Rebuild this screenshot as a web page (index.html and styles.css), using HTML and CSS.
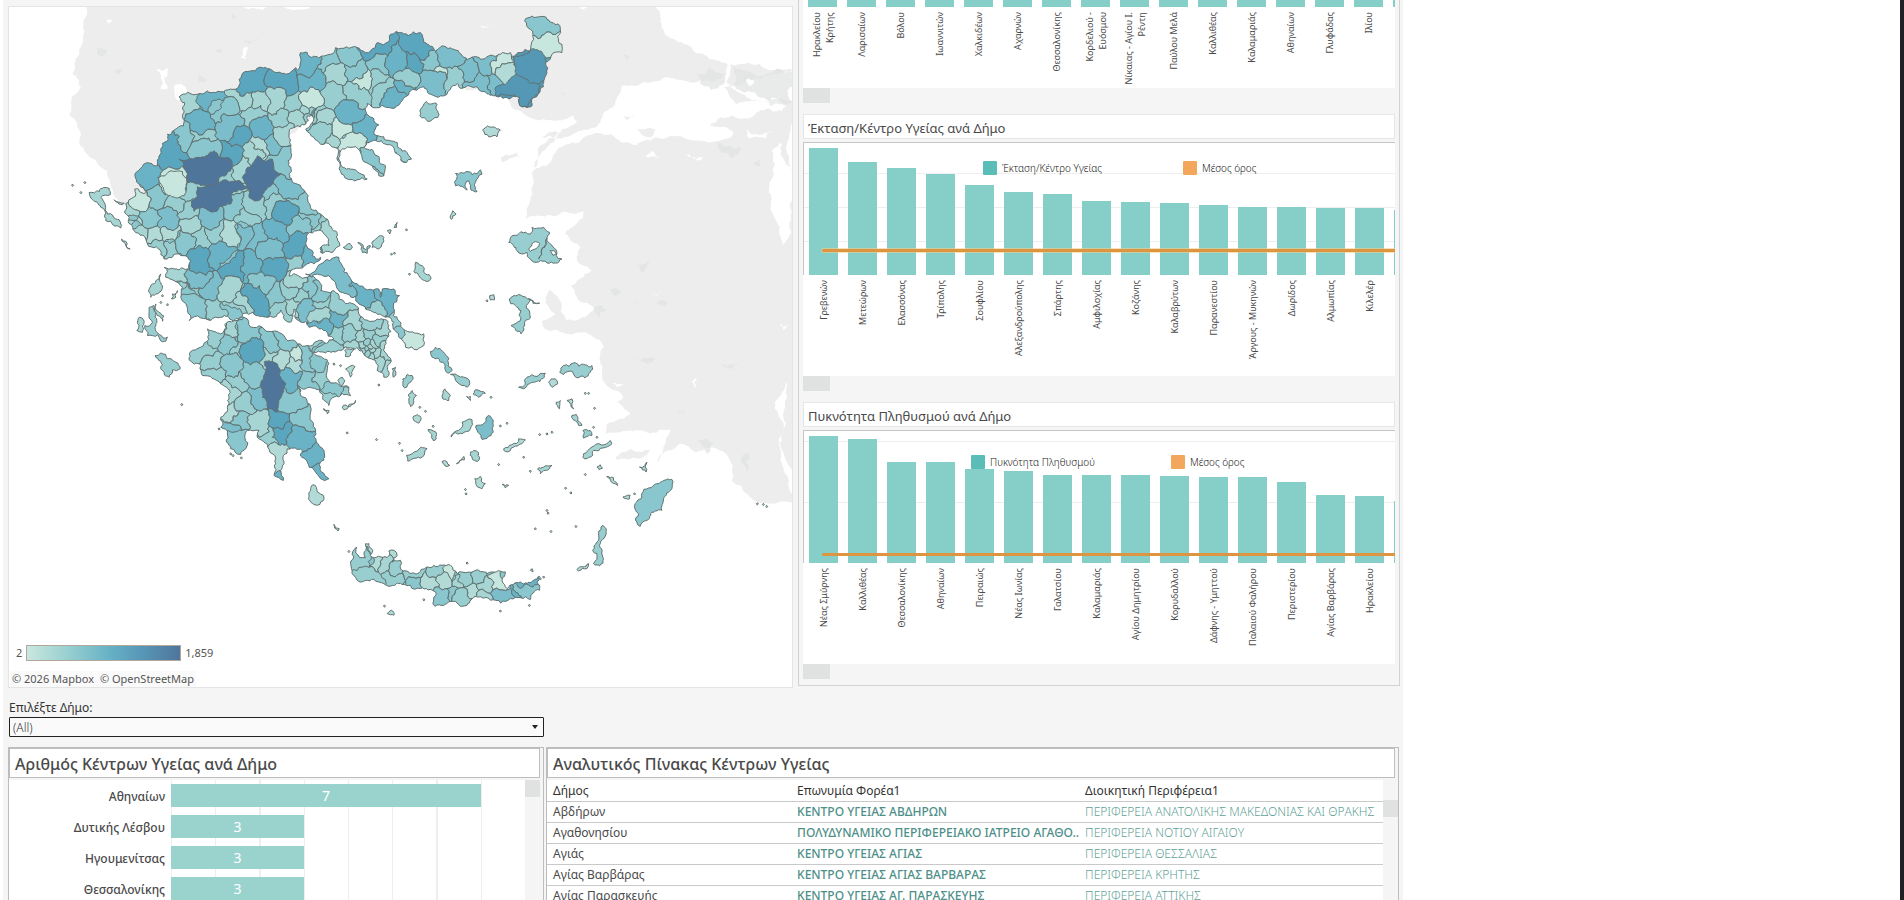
FILE: index.html
```html
<!DOCTYPE html>
<html lang="el">
<head>
<meta charset="utf-8">
<title>Κέντρα Υγείας</title>
<link rel="stylesheet" href="styles.css">
</head>
<body>
<main class="dashboard">
  <div class="upper">
    <section class="map-card" aria-label="Χάρτης Δήμων">
      <svg class="map" id="map" viewBox="24 18 2352 2043" preserveAspectRatio="xMidYMin slice"></svg>
      <div class="map-legend"><span>2</span><span class="ramp"></span><span>1,859</span></div>
      <div class="credits"><a href="#mapbox">© 2026 Mapbox</a><a href="#osm">© OpenStreetMap</a></div>
    </section>
    <section class="charts">
      <div class="chart first"><div class="plot" id="chart-population"></div></div>
      <div class="thumb"></div>
      <h2 class="chart-title">Έκταση/Κέντρο Υγείας ανά Δήμο</h2>
      <div class="chart">
        <div class="grid-line area-1"></div><div class="grid-line area-2"></div><div class="grid-line area-3"></div>
        <div class="plot" id="chart-area"></div>
        <div class="average area-average"></div>
        <div class="legend area-legend"><span class="key teal">Έκταση/Κέντρο Υγείας</span><span class="key orange">Μέσος όρος</span></div>
      </div>
      <div class="thumb"></div>
      <h2 class="chart-title">Πυκνότητα Πληθυσμού ανά Δήμο</h2>
      <div class="chart">
        <div class="grid-line density-1"></div><div class="grid-line density-2"></div>
        <div class="plot" id="chart-density"></div>
        <div class="average density-average"></div>
        <div class="legend density-legend"><span class="key teal">Πυκνότητα Πληθυσμού</span><span class="key orange">Μέσος όρος</span></div>
      </div>
      <div class="thumb"></div>
    </section>
  </div>

  <div class="filter">
    <label for="municipality">Επιλέξτε Δήμο:</label>
    <div class="select-box">
      <select id="municipality"><option>(All)</option></select>
      <svg class="caret" viewBox="0 0 6 4"><path d="M0 0h6L3 4z"/></svg>
    </div>
  </div>

  <div class="lower">
    <section class="panel counts">
      <h2 class="panel-title">Αριθμός Κέντρων Υγείας ανά Δήμο</h2>
      <div class="panel-body">
        <div class="count-rows">
          <div class="count-row"><span class="name">Αθηναίων</span><span class="track"><span class="fill seven">7</span></span></div>
          <div class="count-row"><span class="name">Δυτικής Λέσβου</span><span class="track"><span class="fill three">3</span></span></div>
          <div class="count-row"><span class="name">Ηγουμενίτσας</span><span class="track"><span class="fill three">3</span></span></div>
          <div class="count-row"><span class="name">Θεσσαλονίκης</span><span class="track"><span class="fill three">3</span></span></div>
        </div>
        <div class="scroll"><div class="scroll-thumb"></div></div>
      </div>
    </section>
    <section class="panel detail">
      <h2 class="panel-title">Αναλυτικός Πίνακας Κέντρων Υγείας</h2>
      <div class="panel-body">
        <table>
          <colgroup><col class="c1"><col class="c2"><col></colgroup>
          <thead><tr><th>Δήμος</th><th>Επωνυμία Φορέα1</th><th>Διοικητική Περιφέρεια1</th></tr></thead>
          <tbody>
            <tr><td>Αβδήρων</td><td>ΚΕΝΤΡΟ ΥΓΕΙΑΣ ΑΒΔΗΡΩΝ</td><td>ΠΕΡΙΦΕΡΕΙΑ ΑΝΑΤΟΛΙΚΗΣ ΜΑΚΕΔΟΝΙΑΣ ΚΑΙ ΘΡΑΚΗΣ</td></tr>
            <tr><td>Αγαθονησίου</td><td>ΠΟΛΥΔΥΝΑΜΙΚΟ ΠΕΡΙΦΕΡΕΙΑΚΟ ΙΑΤΡΕΙΟ ΑΓΑΘΟ..</td><td>ΠΕΡΙΦΕΡΕΙΑ ΝΟΤΙΟΥ ΑΙΓΑΙΟΥ</td></tr>
            <tr><td>Αγιάς</td><td>ΚΕΝΤΡΟ ΥΓΕΙΑΣ ΑΓΙΑΣ</td><td>ΠΕΡΙΦΕΡΕΙΑ ΘΕΣΣΑΛΙΑΣ</td></tr>
            <tr><td>Αγίας Βαρβάρας</td><td>ΚΕΝΤΡΟ ΥΓΕΙΑΣ ΑΓΙΑΣ ΒΑΡΒΑΡΑΣ</td><td>ΠΕΡΙΦΕΡΕΙΑ ΚΡΗΤΗΣ</td></tr>
            <tr><td>Αγίας Παρασκευής</td><td>ΚΕΝΤΡΟ ΥΓΕΙΑΣ ΑΓ. ΠΑΡΑΣΚΕΥΗΣ</td><td>ΠΕΡΙΦΕΡΕΙΑ ΑΤΤΙΚΗΣ</td></tr>
          </tbody>
        </table>
        <div class="scroll below-head"><div class="scroll-thumb"></div></div>
      </div>
    </section>
  </div>
</main>
<div class="window-edge"></div>
<script src="app.js"></script>
</body>
</html>
```

FILE: styles.css
```css
* { box-sizing: border-box; }
body {
  margin: 0;
  height: 100vh;
  overflow: hidden;
  display: flex;
  justify-content: space-between;
  background: #fff;
  font-family: "Noto Sans", "Open Sans", sans-serif;
  color: #4a4a4a;
}
h2 { margin: 0; }
.dashboard {
  flex: 0 1 1400px;
  min-width: 0;
  margin-left: 3px;
  padding: 0 3px 0 5px;
  background: #f5f5f5;
  display: flex;
  flex-direction: column;
  overflow: hidden;
}
.window-edge { width: 4px; background: #202124; }

.upper {
  display: grid;
  grid-template-columns: minmax(0, 785fr) minmax(0, 602fr);
  gap: 5px;
  height: 688px;
  flex: none;
}
.map-card {
  position: relative;
  margin-top: 6px;
  border: 1px solid #e4e4e4;
  background: #fff;
  box-shadow: 0 -6px 0 #f5f5f5, 0 -7px 0 #e4e4e4;
  overflow: hidden;
}
.map { display: block; width: 100%; height: 100%; }
.terrain { fill: #ededed; }
.terrain-shade { fill: #e0e2e2; opacity: .7; }
.water { fill: #fff; }
.cell, .isle { stroke: #60706f; stroke-width: 3; stroke-linejoin: round; }
.base { fill: #8ac6cd; }
.coast { fill: none; stroke: #60706f; stroke-width: 3; stroke-linejoin: round; }
.map-legend {
  position: absolute; left: 7px; bottom: 26px;
  display: flex; align-items: center; gap: 4px;
  font-size: 11px; line-height: 16px; color: #555;
}
.ramp {
  width: 155px; height: 16px;
  border: 1px solid #b3a89c;
  background: linear-gradient(90deg, #c9e7df, #9bd1d1 25%, #65b0c5 55%, #5797b7 75%, #4f759b);
}
.credits {
  position: absolute; left: 1px; bottom: 0;
  display: flex; gap: 6px; padding: 0 2px;
  font-size: 11px; line-height: 16px; background: #fafafa;
}
.credits a { color: #555; text-decoration: none; }

.charts {
  height: 686px;
  padding: 0 4px;
  border: 1px solid #d2d2d2;
  border-top: 0;
  overflow: hidden;
}
.chart {
  position: relative;
  height: 234px;
  overflow: hidden;
  border-top: 1px solid #c6c6c6;
  background: #fff;
}
.chart.first { height: 88px; border: 0; }
.plot { display: flex; position: relative; }
.column { flex: 0 0 39px; display: flex; flex-direction: column; align-items: center; }
.bar-space { height: 132px; display: flex; align-items: flex-end; }
.chart:not(.first) .plot { border-left: 1px solid #c6c6c6; border-image: linear-gradient(#c6c6c6 132px, transparent 132px) 1; }
.first .bar-space { height: 7px; }
.bar { width: 29px; background: #86cfc9; }
.caption {
  margin-top: 5px;
  writing-mode: vertical-rl;
  transform: rotate(180deg);
  font-size: 9px;
  line-height: 13px;
  text-align: right;
  color: #4a4a4a;
  white-space: pre;
}
.grid-line { position: absolute; left: 0; right: 0; height: 1px; background: #eeeeee; }
.area-1 { top: 30px; }
.area-2 { top: 64px; }
.area-3 { top: 98px; }
.density-1 { top: 10px; }
.density-2 { top: 71px; }
.average { position: absolute; left: 19px; right: 0; height: 3px; background: #dd9542; border-radius: 2px 0 0 2px; }
.area-average { top: 106px; box-shadow: 0 0 0 1px rgba(245, 205, 140, .6); }
.density-average { top: 122px; }
.legend { position: absolute; display: flex; }
.area-legend { top: 18px; left: 180px; }
.density-legend { top: 24px; left: 168px; }
.key { width: 200px; display: flex; gap: 5px; align-items: center; font-size: 10px; font-weight: 300; line-height: 14px; color: #222; }
.key::before { content: ""; width: 14px; height: 14px; border-radius: 1px; }
.teal::before { background: #5abdb8; }
.orange::before { background: #f3a75d; }
.thumb { width: 27px; height: 15px; background: #e0e2e2; }
.chart-title {
  height: 25px;
  margin: 11px 0 3px;
  padding: 0 4px;
  border: 1px solid #e6e6e6;
  background: #fff;
  font-size: 13px;
  line-height: 26px;
  font-weight: 400;
}

.filter { width: 38.5%; flex: none; padding: 10px 0 0 1px; color: #333; }
.filter label { display: block; font-size: 12px; line-height: 19px; }
.select-box { position: relative; }
.filter select {
  appearance: none;
  display: block;
  width: 100%;
  height: 20px;
  padding: 0 3px;
  border: 1px solid #222;
  border-radius: 1px;
  background: #fafafa;
  font: 300 12px "Noto Sans", sans-serif;
  color: #333;
}
.caret { position: absolute; right: 6px; top: 8px; width: 6px; height: 4px; fill: #222; }

.lower { flex: 1; min-height: 0; display: flex; gap: 2px; margin-top: 10px; padding-right: 1px; }
.panel { border: 1px solid #bdbdbd; border-bottom: 0; min-width: 0; overflow: hidden; }
.counts { flex: 536 1 0; }
.detail { flex: 854 1 0; }
.panel-title {
  height: 30px;
  margin-right: 3px;
  padding: 0 5px;
  border: 1px solid #bdbdbd;
  background: #fff;
  font-size: 16px;
  line-height: 30px;
  font-weight: 500;
}
.panel-body { display: flex; margin-top: 2px; height: 130px; }
.counts .panel-body { margin-right: 3px; }
.scroll { flex: 0 0 15px; }
.scroll-thumb { height: 17px; background: #e0e2e2; }
.below-head { padding-top: 20px; }
.count-rows { flex: 1; background: #fff; }
.count-row { display: flex; height: 31px; }
.name { flex: 0 0 162px; padding: 4px 6px 0 0; font-size: 12px; line-height: 25px; font-weight: 500; text-align: right; }
.track {
  flex: 1;
  padding-top: 4px;
  background: repeating-linear-gradient(90deg, #eeeeee 0 1px, transparent 1px 12.5%);
}
.fill { display: block; height: 23px; background: #9ad2cd; color: #fff; font-size: 14px; line-height: 24px; text-align: center; }
.seven { width: 87.5%; }
.three { width: 37.5%; }

table { flex: 1; min-width: 0; table-layout: fixed; border-collapse: collapse; background: #fff; align-self: flex-start; }
.c1 { width: 244px; }
.c2 { width: 288px; }
th, td { height: 21px; padding: 0 0 0 6px; border-bottom: 1px solid #c9c9c9; font-size: 12px; line-height: 20px; text-align: left; white-space: nowrap; overflow: hidden; }
th { font-weight: 400; color: #333; padding-top: 2px; line-height: 18px; }
td { font-weight: 400; }
td:nth-child(2) { font-weight: 500; color: #4e8f88; }
td:nth-child(3) { font-weight: 300; color: #5f9f98; }
```

FILE: app.js
```js
const captions = {
  population: ["Ηρακλείου\nΚρήτης", "Λαρισαίων", "Βόλου", "Ιωαννιτών", "Χαλκιδέων", "Αχαρνών", "Θεσσαλονίκης", "Κορδελιού -\nΕυόσμου", "Νίκαιας - Αγίου Ι.\nΡέντη", "Παύλου Μελά", "Καλλιθέας", "Καλαμαριάς", "Αθηναίων", "Γλυφάδας", "Ιλίου", ""],
  area: ["Γρεβενών", "Μετεώρων", "Ελασσόνας", "Τρίπολης", "Σουφλίου", "Αλεξανδρούπολης", "Σπάρτης", "Αμφιλοχίας", "Κοζάνης", "Καλαβρύτων", "Παρανεστίου", "Άργους - Μυκηνών", "Δωρίδος", "Αλμωπίας", "Κιλελέρ", ""],
  density: ["Νέας Σμύρνης", "Καλλιθέας", "Θεσσαλονίκης", "Αθηναίων", "Πειραιώς", "Νέας Ιωνίας", "Γαλατσίου", "Καλαμαριάς", "Αγίου Δημητρίου", "Κορυδαλλού", "Δάφνης - Υμηττού", "Παλαιού Φαλήρου", "Περιστερίου", "Αγίας Βαρβάρας", "Ηρακλείου", ""]
};
const heights = {
  population: Array(16).fill(7),
  area: [127, 113, 107, 101, 90, 83, 81, 74, 73, 72, 70, 68, 68, 67, 67, 65],
  density: [127, 124, 101, 101, 94, 92, 88, 88, 88, 87, 86, 86, 81, 68, 67, 62]
};
for (const key of Object.keys(captions)) {
  document.getElementById("chart-" + key).innerHTML = captions[key].map((text, i) =>
    `<div class="column"><div class="bar-space"><div class="bar" style="height:${heights[key][i]}px"></div></div><div class="caption">${text}</div></div>`).join("");
}

const ramp = ["#c6e6de", "#b2dbd7", "#a6d5d3", "#98ced0", "#8ac6cd", "#7bbdca", "#6ab2c6", "#5ba6bf", "#5598b6", "#4f759b"];
const parse = s => s.trim().split(/\s+/).map(p => p.split(",").map(Number));
const hash = n => { const v = Math.sin(n * 12.9898) * 43758.5453; return v - Math.floor(v) - 0.5; };

/* Breaks a straight edge into an irregular one; the same edge always breaks the same way. */
function rough(a, b, amount, minimum) {
  const flip = a[0] > b[0] || (a[0] === b[0] && a[1] > b[1]);
  const [p, q] = flip ? [b, a] : [a, b];
  const len = Math.hypot(q[0] - p[0], q[1] - p[1]);
  if (len < minimum) return [b];
  const k = hash(Math.round(p[0]) * 3.1 + Math.round(p[1]) * 7.7 + Math.round(q[0]) * 1.3 + Math.round(q[1])) * amount;
  const m = [(p[0] + q[0]) / 2 - (q[1] - p[1]) * k, (p[1] + q[1]) / 2 + (q[0] - p[0]) * k];
  return rough(a, m, amount, minimum).concat(rough(m, b, amount, minimum));
}
function outline(points, amount = 0.5, minimum = 9) {
  let out = [];
  points.forEach((p, i) => { out = out.concat(rough(p, points[(i + 1) % points.length], amount, minimum)); });
  return "M" + out.map(p => p.map(v => v.toFixed(1)).join(" ")).join("L") + "Z";
}
function cellOf(seed, seeds) {
  let poly = [[seed[0] - 260, seed[1] - 260], [seed[0] + 260, seed[1] - 260], [seed[0] + 260, seed[1] + 260], [seed[0] - 260, seed[1] + 260]];
  for (const s of seeds) {
    if (s === seed) continue;
    const nx = s[0] - seed[0], ny = s[1] - seed[1];
    const c = (s[0] + seed[0]) / 2 * nx + (s[1] + seed[1]) / 2 * ny;
    const next = [];
    poly.forEach((p, i) => {
      const q = poly[(i + 1) % poly.length];
      const dp = p[0] * nx + p[1] * ny - c, dq = q[0] * nx + q[1] * ny - c;
      if (dp <= 0) next.push(p);
      if (dp * dq < 0) { const t = dp / (dp - dq); next.push([p[0] + (q[0] - p[0]) * t, p[1] + (q[1] - p[1]) * t]); }
    });
    poly = next;
  }
  return poly.map(p => p.map(Math.round));
}

const lands = {
  north: {
    shape: "372,630 375,608 397,590 402,565 420,575 438,575 415,550 402,520 425,497 470,495 480,450 485,428 500,420 500,400 520,388 548,375 550,330 535,288 590,280 620,270 645,275 675,268 704,265 722,225 750,210 800,203 830,215 870,213 885,200 890,208 900,155 920,155 990,160 1005,140 1070,140 1080,148 1130,125 1165,122 1170,100 1205,95 1222,105 1260,95 1270,125 1305,150 1320,138 1360,145 1400,178 1440,175 1465,165 1480,165 1500,160 1530,155 1542,170 1560,155 1590,150 1600,115 1590,85 1573,60 1595,45 1640,55 1680,80 1685,130 1685,155 1655,160 1650,175 1628,180 1630,245 1620,265 1600,290 1580,320 1565,318 1560,290 1520,290 1480,285 1440,270 1420,260 1385,262 1370,248 1350,265 1320,285 1290,280 1260,260 1235,265 1220,285 1200,305 1160,320 1100,308 1095,330 1120,360 1135,372 1120,400 1150,408 1190,425 1215,450 1233,475 1218,485 1195,462 1160,432 1120,418 1100,425 1090,440 1130,465 1155,495 1150,525 1135,525 1115,495 1085,475 1078,450 1020,450 1015,478 1050,505 1100,535 1070,537 1020,512 1012,480 1015,450 960,430 940,410 915,385 938,362 935,342 920,345 915,370 880,380 865,410 870,440 862,480 865,520 890,550 915,575 930,620 960,640 985,670 1010,700 1018,735 1000,750 960,755 965,735 985,735 980,710 950,690 920,700 915,730 935,750 945,775 960,770 940,790 905,802 870,810 865,826 920,830 960,850 960,870 1000,870 1015,895 1060,910 1075,940 1130,955 1165,975 1162,1010 1158,1060 1167,1090 1165,1125 1150,1130 1130,1110 1125,1080 1100,1070 1085,1050 1050,1042 1020,1050 975,1057 930,1055 920,1035 950,1022 1000,1015 975,990 925,980 895,960 880,925 868,965 840,928 820,950 780,948 730,938 660,950 600,952 565,960 560,930 540,890 545,860 520,840 495,830 490,800 520,805 565,805 570,780 545,765 505,770 490,775 480,762 440,730 400,690 385,650",
    seeds: "570,310,2 635,300,6 760,240,7 850,250,7 730,300,2 670,335,4 600,370,6 775,300,2 825,300,2 930,240,6 908,185,6 990,180,4 1040,160,4 1130,150,7 1010,215,2 1060,210,4 1085,235,0 1140,195,4 1130,240,3 1065,275,3 1155,270,3 1000,290,3 1190,190,6 1190,285,6 930,310,0 880,315,3 690,375,5 760,345,3 840,355,3 890,350,2 790,385,6 850,390,2 600,405,3 540,410,4 1050,330,6 960,355,2 960,390,3 1030,390,0 1090,380,6 1045,425,0 990,430,2 1050,505,3 1120,480,4 1180,425,3 715,410,7 700,455,7 605,440,4 510,465,7 750,450,2 725,490,2 820,430,5 840,475,4 770,440,1 440,530,6 515,550,0 690,535,3 570,570,3 410,600,0 470,590,4 800,580,4 860,555,5 895,590,4 520,615,3 385,640,2 400,670,2 440,655,4 500,655,5 560,640,3 625,650,5 700,620,4 760,620,3 820,610,3 855,640,7 930,650,4 415,695,2 455,710,1 510,700,1 570,670,2 600,710,3 645,690,3 690,695,1 735,650,3 725,695,5 765,710,5 830,690,6 895,680,4 970,690,3 1005,725,2 470,745,3 515,740,3 545,720,4 600,780,7 660,760,6 810,750,5 890,740,7 930,770,6 750,800,6 700,800,7 820,805,7 890,790,3 530,820,2 630,860,5 590,830,5 570,880,3 685,880,2 720,900,2 765,890,7 790,850,4 830,880,4 860,930,3 590,930,4 640,930,3 690,925,3 890,840,2 870,870,3 900,890,3 930,865,4 960,885,4 880,915,2 915,920,5 965,900,3 1010,905,3 965,945,2 1010,950,6 970,975,6 1060,970,2 1110,970,3 1140,990,2 1050,1000,3 1010,1005,3 940,1040,3 1000,1045,3 1060,1040,2 1085,1010,2 1105,1005,3 1130,1020,3 1150,1060,2 1155,1100,2 1135,1080,2 1090,1035,2 1100,1028,3 1108,1038,2 1098,1045,3 1088,1050,2 1112,1050,2 1118,1030,2 1104,1055,3 1112,1064,2 1125,1060,2 930,335,3 918,335,2 925,345,3 940,340,2 948,345,3 1260,150,7 1240,190,7 1225,230,3 1210,270,6 1280,180,4 1345,165,5 1280,240,5 1320,235,0 1355,235,3 1410,210,5 1430,240,5 1450,190,5 1500,190,0 1520,220,1 1470,255,5 1585,190,8 1545,270,8 1590,270,8 1640,170,7 1640,138,0 1640,90,4"
  },
  peloponnese: {
    shape: "620,985 660,1000 700,960 740,955 790,985 850,1005 890,1030 940,1060 985,1090 980,1110 985,1140 1045,1160 1050,1185 1000,1190 985,1215 965,1180 915,1165 893,1155 900,1185 930,1235 945,1290 970,1350 960,1385 985,1435 960,1435 920,1385 905,1350 860,1345 850,1390 840,1410 848,1440 820,1425 825,1390 815,1360 775,1315 775,1290 740,1290 732,1310 735,1345 720,1362 690,1345 680,1300 660,1280 660,1250 685,1210 685,1190 660,1150 605,1125 600,1095 565,1078 568,1055 600,1040",
    seeds: "700,980,2 740,1000,4 640,1010,3 680,1030,4 620,1060,3 710,1040,3 755,1050,7 820,1030,4 860,1030,4 810,1065,2 850,1070,1 890,1060,0 880,1085,1 930,1080,4 640,1085,3 640,1115,3 690,1095,4 745,1120,4 870,1125,6 930,1140,4 970,1130,3 1000,1170,3 690,1170,2 710,1145,3 770,1190,5 735,1210,3 870,1200,4 690,1235,1 720,1260,4 695,1300,5 725,1320,4 775,1265,2 830,1255,7 845,1295,7 905,1250,4 890,1310,6 800,1310,3 840,1370,1 940,1350,6 970,1420,6"
  },
  euboea: {
    shape: "915,820 960,790 1015,770 1025,795 1070,850 1135,865 1140,890 1145,865 1180,865 1197,885 1195,960 1215,990 1270,1000 1270,1035 1250,1048 1215,1040 1195,1010 1180,965 1145,945 1120,935 1075,910 1040,880 1000,840 950,820",
    seeds: "980,800,4 1050,840,5 1100,885,6 1165,900,6 1110,925,3 1190,980,3 1240,1020,0"
  },
  crete: {
    shape: "1060,1725 1060,1670 1068,1640 1077,1672 1095,1672 1095,1630 1105,1630 1108,1665 1160,1672 1165,1652 1180,1650 1190,1665 1175,1685 1200,1680 1208,1712 1280,1700 1300,1695 1350,1695 1370,1720 1440,1714 1460,1720 1515,1715 1505,1740 1520,1765 1560,1745 1600,1740 1618,1728 1618,1770 1590,1798 1530,1795 1470,1800 1400,1815 1304,1818 1305,1775 1260,1765 1230,1755 1150,1750 1120,1737 1070,1740",
    seeds: "1080,1685,3 1125,1680,1 1155,1685,2 1100,1730,3 1180,1660,1 1190,1700,3 1180,1735,3 1240,1715,3 1310,1710,3 1350,1720,0 1290,1745,1 1250,1752,4 1330,1735,1 1320,1790,4 1360,1790,4 1380,1735,2 1415,1770,1 1400,1735,3 1430,1730,3 1450,1755,2 1440,1790,2 1485,1745,0 1500,1790,5 1570,1790,6 1590,1750,6 1390,1790,3"
  }
};
const overlays = [
  [9, "535,475 600,470 640,450 655,470 690,475 690,510 655,530 650,548 600,555 560,545 555,510"],
  [9, "590,558 650,545 745,560 690,585 690,610 655,618 650,630 580,632 572,600 590,585"],
  [9, "725,530 740,500 770,465 790,480 815,475 820,505 840,518 800,560 770,600 745,590 740,560"],
  [9, "790,1085 830,1090 855,1150 845,1180 830,1235 800,1225 785,1190 780,1150"],
  [0, "470,530 510,510 545,512 558,540 550,585 530,592 490,572"],
  [8, "1540,165 1590,148 1628,160 1628,240 1600,250 1560,240 1545,215"],
  [8, "1485,260 1515,250 1545,220 1590,248 1620,255 1602,290 1582,318 1565,318 1558,290 1485,285"]
];
const isles = [
  [2, "265,575 325,563 328,582 300,590 320,640 345,655 360,682 315,660 300,620 270,592"], [1, "362,715 375,722 388,745 375,735"], [1, "340,597 370,607 365,612 345,603"],
  [2, "455,850 480,820 485,855 465,880 450,890"], [3, "445,920 458,915 468,960 462,980 500,1010 495,1022 440,1005 432,975 455,965"], [2, "465,910 488,945 485,962 470,945"], [2, "415,950 428,958 425,995 408,990"], [1, "515,880 530,870 525,890 512,895"],
  [3, "463,1065 480,1057 500,1075 525,1085 538,1105 515,1108 505,1130 480,1105"],
  [1, "930,1470 937,1453 970,1490 958,1512 930,1505"], [1, "1000,1572 1016,1585 1012,1592"], [1, "1160,1840 1172,1830 1180,1845"], [1, "1035,1105 1063,1098 1050,1130"], [2, "1012,1140 1025,1130 1033,1140 1025,1155"], [1, "1025,1220 1065,1200 1060,1210 1030,1228"], [1, "968,1225 985,1230 980,1240"], [2, "1175,1105 1185,1100 1178,1130"], [2, "1032,1050 1060,1042 1050,1065 1035,1068"],
  [2, "1028,740 1045,728 1055,742 1035,745"], [3, "1072,725 1095,748 1110,735 1100,758 1085,755"], [2, "1115,740 1140,705 1150,710 1135,745"], [1, "1160,690 1172,688 1168,700"], [1, "1180,680 1190,665 1188,680"],
  [3, "1258,330 1278,302 1310,312 1312,350 1282,362 1258,345"], [1, "1447,388 1480,378 1500,388 1490,408 1465,408"], [4, "1365,518 1400,512 1415,522 1440,507 1445,520 1425,545 1430,572 1412,568 1405,540 1395,550 1400,568 1365,555"], [1, "1350,645 1357,630 1367,640 1353,656"],
  [3, "1525,725 1535,705 1590,700 1595,680 1630,680 1648,695 1640,715 1665,745 1685,775 1665,787 1640,787 1590,775 1580,755 1550,750"], [2, "1245,785 1270,800 1275,820 1292,832 1280,843 1255,825 1240,812"],
  [3, "1527,895 1560,883 1590,895 1590,950 1575,960 1562,1000 1532,975 1560,960 1562,930 1545,915"], [1, "1585,895 1618,908 1600,905"], [1, "1468,885 1480,882 1482,898 1470,898"],
  [4, "1290,1053 1305,1040 1345,1075 1355,1110 1345,1118 1325,1085 1295,1070"], [3, "1350,1122 1390,1130 1408,1148 1400,1160 1370,1145"], [3, "1207,1155 1220,1122 1235,1125 1230,1145 1212,1162"], [2, "1327,1195 1333,1165 1350,1185 1345,1200"], [2, "1225,1200 1235,1170 1248,1185 1240,1205 1230,1218"], [3, "1418,1180 1430,1168 1455,1178 1435,1190"], [1, "1398,1188 1410,1188 1410,1200"],
  [1, "1238,1255 1250,1242 1262,1255 1255,1268"], [2, "1283,1287 1300,1292 1307,1315 1298,1320"], [2, "1352,1310 1375,1290 1385,1265 1415,1258 1410,1285 1385,1300"], [5, "1427,1275 1465,1245 1478,1265 1472,1305 1445,1317 1432,1295"], [2, "1410,1355 1420,1350 1438,1372 1432,1383 1415,1372"], [2, "1218,1365 1235,1360 1262,1340 1280,1345 1265,1370 1222,1382"], [1, "1510,1345 1555,1315 1575,1318 1540,1340 1515,1353"], [1, "1368,1390 1390,1368 1392,1378"], [1, "1325,1383 1348,1395 1340,1398"], [1, "1423,1435 1440,1428 1455,1450 1445,1465 1428,1455"], [1, "1505,1452 1525,1455 1515,1463"], [2, "1612,1405 1630,1400 1655,1395 1635,1410 1620,1420"],
  [3, "1555,1160 1580,1130 1610,1128 1635,1118 1632,1130 1600,1145 1570,1165"], [3, "1678,1115 1690,1095 1720,1087 1755,1093 1775,1095 1770,1115 1730,1132 1715,1112 1690,1122"], [1, "1645,1145 1665,1135 1672,1150 1658,1160"], [1, "1668,1205 1680,1200 1678,1225"], [1, "1700,1200 1715,1195 1720,1225"], [2, "1715,1245 1728,1242 1745,1275 1735,1275"], [3, "1748,1290 1770,1290 1775,1305 1750,1313"], [2, "1750,1360 1775,1340 1830,1320 1835,1330 1780,1350 1757,1375 1748,1370"], [1, "1790,1400 1800,1393 1807,1403 1797,1408"], [1, "1820,1428 1840,1432 1852,1455 1838,1448"], [2, "1918,1400 1940,1385 1938,1415"], [1, "1868,1490 1890,1485 1888,1495"],
  [4, "1905,1510 1925,1480 1970,1450 2015,1437 2015,1465 1990,1495 1985,1530 1965,1532 1940,1560 1920,1578 1910,1565 1915,1540"], [3, "1795,1600 1808,1575 1812,1580 1800,1630 1810,1675 1798,1697 1780,1690 1790,1660 1777,1650 1790,1625"], [1, "1730,1708 1765,1690 1760,1705 1735,1712"], [1, "1590,1710 1595,1705 1598,1715"]
];
const speckles = "215,553 252,545 240,575 1173,760 1182,757 1218,687 1227,820 1460,900 1135,1153 1040,1297 1128,1317 1197,1328 543,1212 690,1360 722,1372 697,1365 655,1285 1000,1090 1020,1095 1395,1467 1397,1480 1495,1392 1590,1412 1696,1463 1712,1477 1640,1530 1643,1538 1605,1585 1652,1593 1727,1578 1500,1832 1587,1815 1270,1798 1400,1688 1500,1276 1520,1268 1298,1277 1640,1300 1618,1302 1655,1295 1780,1280 1783,1223 1755,1178 1765,1178 2272,1510 2290,1512 2300,1518 1205,1350 1275,1232 1258,1220 1472,1190 480,905 500,912 485,885 1045,1653 1152,1817 1620,1735 1630,1730 1903,1480 1790,1310 1570,1370 1755,1422";
const terrain = [
  "255,10 250,90 235,160 215,220 240,260 212,290 205,340 230,380 235,430 280,475 320,510 330,560 350,595 400,620 900,380 1500,250 1570,340 1600,355 1720,345 1730,362 1660,425 1610,495 1600,500 1615,440 1680,395 1620,410 1800,365 1845,310 1865,255 1950,245 2000,228 2080,245 2160,235 2183,190 2080,150 2030,120 1985,80 1960,10",
  "2390,213 2240,187 2190,192 2180,245 2240,290 2376,310 2390,1500 2330,1508 2240,1480 2195,1440 2198,1395 2150,1345 2090,1355 2040,1330 1970,1385 1990,1340 2020,1285 1880,1292 1815,1300 1820,1270 1890,1240 1850,1205 1870,1190 1815,1150 1805,1120 1810,1040 1800,1020 1720,1000 1630,980 1625,960 1665,940 1635,890 1645,868 1680,900 1700,960 1800,920 1745,905 1712,855 1775,810 1730,780 1740,740 1695,700 1755,630 1690,632 1575,655 1590,600 1595,515 1640,495 1700,430 1760,405 1830,400 1870,425 1950,420 1965,410 2060,415 2190,410 2200,395 2130,372 2200,345 2320,315 2210,310 2170,260",
  "2300,290 2390,300 2390,1500 2340,1500",
  "1500,470 1550,455 1555,468 1505,485", "1845,1370 1950,1350 1940,1365 1850,1378", "1870,345 1905,342 1880,358", "1905,380 1965,385 1950,410"
];
const waters = ["465,205 500,200 500,265 470,275", "525,250 560,270 550,285 535,300", "730,140 742,140 735,175 720,170", "315,55 335,60 320,68", "1935,470 1955,450 1980,470", "2060,460 2110,470 2090,478", "2240,385 2315,390 2300,410 2240,405", "1640,75 1680,68 1660,80", "1440,75 1485,70 1450,80", "2240,235 2262,238 2245,255", "2340,970 2365,975 2350,988", "1955,878 1985,875 1970,885", "1835,1150 1870,1150 1850,1160", "1780,1210 1830,1180 1850,1230 1800,1250", "2075,1145 2090,1130 2090,1165", "2250,320 2320,312 2360,318 2290,330"];
const shades = ["285,140 320,150 300,165", "340,210 365,205 355,220", "730,120 775,110 750,130", "590,220 620,235 605,245", "640,148 665,150 655,156", "2090,220 2130,200 2180,215 2170,250 2100,250", "2200,200 2376,215 2376,305 2280,290 2200,250", "2150,425 2225,440 2200,470 2160,450", "2260,485 2280,475 2280,495", "1830,870 1865,875 1850,885", "1905,790 1945,780 1930,815", "1780,920 1820,925 1800,950", "2165,1090 2220,1085 2190,1105", "1905,1075 1965,1075 1940,1090", "2090,1320 2140,1330 2120,1360", "2235,1360 2250,1360 2245,1415", "2030,1232 2055,1232 2050,1242", "1870,160 1890,170 1880,180", "1680,275 1700,278 1690,285", "690,38 710,50 700,55", "1905,905 1930,908 1920,914", "1970,905 2010,910 1990,918"];

let art = "";
terrain.forEach(t => { art += `<path class="terrain" d="${outline(parse(t), 0.3)}"/>`; });
shades.forEach(t => { art += `<path class="terrain-shade" d="${outline(parse(t))}"/>`; });
waters.forEach(t => { art += `<path class="water" d="${outline(parse(t))}"/>`; });
for (const [id, land] of Object.entries(lands)) {
  const d = outline(parse(land.shape), 0.5, 10), seeds = parse(land.seeds);
  art += `<clipPath id="${id}"><path d="${d}"/></clipPath><g clip-path="url(#${id})"><path class="base" d="${d}"/>`;
  seeds.forEach(s => { art += `<path class="cell" fill="${ramp[s[2]]}" d="${outline(cellOf(s, seeds), 0.6, 12)}"/>`; });
  art += `</g><path class="coast" d="${d}"/>`;
}
overlays.forEach(([level, t]) => { art += `<path class="cell" fill="${ramp[level]}" d="${outline(parse(t), 0.4)}"/>`; });
isles.forEach(([level, t]) => { art += `<path class="isle" fill="${ramp[level]}" d="${outline(parse(t))}"/>`; });
parse(speckles).forEach(([x, y]) => { art += `<path class="isle" fill="${ramp[1]}" d="M${x - 3} ${y}l3 -3l3 4l-3 3z"/>`; });
art += `<path class="water isle" fill="none" d="${outline(parse("1585,745 1600,725 1618,728 1612,740 1590,752"))}"/><path class="water isle" d="M1650 750l12 0l6 10l-10 4z"/><path class="isle" fill="none" d="${outline(parse("1640,712 1625,745 1615,775 1625,745"))}"/>`;
document.getElementById("map").innerHTML = art;
```
